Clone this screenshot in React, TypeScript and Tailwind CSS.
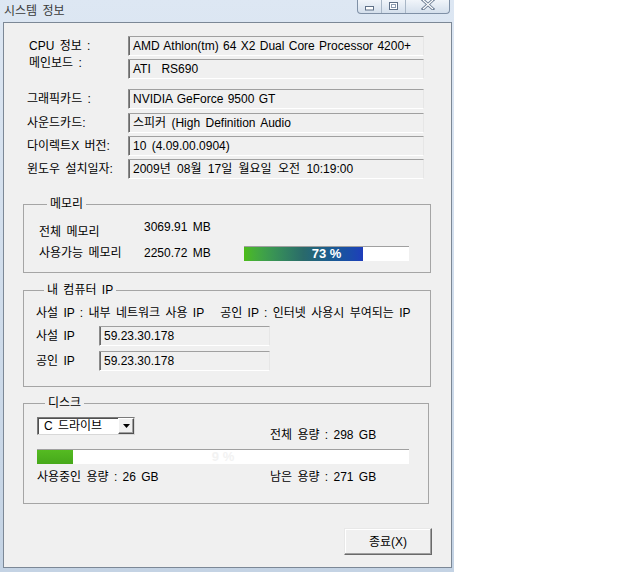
import React from "react";

const FONT = "font-['Liberation_Sans','Noto_Sans_CJK_KR',sans-serif]";

function Field({ children, className }: { children: React.ReactNode; className: string }) {
  return (
    <div
      className={`${className} h-[20px] flex items-center pl-[4px] whitespace-nowrap bg-[#f0f0f0] border border-t-[#a0a0a0] border-l-[#8a8a8a] border-r-[#e6e6e6] border-b-[#ffffff] shadow-[inset_1px_0_0_#6a6a6a]`}
    >
      {children}
    </div>
  );
}

function InfoRow({
  label,
  value,
  className,
  labelClass,
  valueClass,
}: {
  label: string;
  value: string;
  className: string;
  labelClass: string;
  valueClass: string;
}) {
  return (
    <div className={`flex items-center ${className}`}>
      <div className={`w-[101px] whitespace-nowrap ${labelClass}`}>{label}</div>
      <Field className={`w-[296px] ${valueClass}`}>{value}</Field>
    </div>
  );
}

function Legend({ children }: { children: React.ReactNode }) {
  return <legend className="ml-[8px] px-[3px] leading-[14px]">{children}</legend>;
}

export default function App() {
  return (
    <div className={`w-[640px] h-[572px] bg-white flex text-[12px] leading-[14px] text-black [word-spacing:2px] ${FONT}`}>
      <div className="w-[454px] h-[572px] flex flex-col bg-linear-to-b from-[#dde7f3] to-[#c4d3e4] pl-[3px] pr-[2px] pb-[4px]">
        {/* Title bar */}
        <div className="h-[22px] flex items-start justify-between">
          <div className="h-[22px] flex items-center pl-[1px] text-[#3a3a3a] text-[12px]">시스템 정보</div>
          <div className="flex h-[14px] mr-[2px] rounded-b-[4px] border border-t-0 border-[#7f90a6] overflow-hidden bg-linear-to-b from-[#f1f5fa] to-[#d4dfec]">
            <div className="w-[24px] border-r border-[#a8b6c6] flex justify-center pt-[6px]">
              <svg width="9" height="5" viewBox="0 0 9 5">
                <rect x="0.5" y="0.5" width="8" height="3.5" fill="#ffffff" stroke="#5f7087" />
              </svg>
            </div>
            <div className="w-[24px] border-r border-[#a8b6c6] flex justify-center pt-[2px]">
              <svg width="9" height="8" viewBox="0 0 9 8">
                <rect x="0.5" y="0.5" width="8" height="7" fill="#ffffff" stroke="#5f7087" />
                <rect x="2.5" y="2.5" width="4" height="3" fill="none" stroke="#8a9ab0" />
              </svg>
            </div>
            <div className="w-[43px] flex justify-center pt-[0px]">
              <svg width="14" height="10" viewBox="0 0 14 10">
                <path d="M2 0 L12 9 M12 0 L2 9" stroke="#6a7b92" strokeWidth="3" strokeLinecap="square" />
                <path d="M2 0 L12 9 M12 0 L2 9" stroke="#ffffff" strokeWidth="1.2" />
              </svg>
            </div>
          </div>
        </div>

        {/* Client area */}
        <div className="flex-1 flex flex-col bg-[#f0f0f0] border border-[#7c8896]">
          {/* Info rows */}
          <div className="flex flex-col pt-[13px] pl-[23px]">
            <InfoRow
              label="CPU 정보 :"
              value="AMD Athlon(tm) 64 X2 Dual Core Processor 4200+"
              className="h-[20px]"
              labelClass="pl-[2px]"
              valueClass="[word-spacing:1px]"
            />
            <div className="flex items-start h-[20px] mt-[3px]">
              <div className="w-[101px] pl-[2px] -mt-[3px] whitespace-nowrap">메인보드 :</div>
              <Field className="w-[296px]">ATI&nbsp;&nbsp;RS690</Field>
            </div>
            <InfoRow label="그래픽카드 :" value="NVIDIA GeForce 9500 GT" className="h-[20px] mt-[10px]" labelClass="" valueClass="[word-spacing:1px]" />
            <InfoRow label="사운드카드:" value="스피커 (High Definition Audio" className="h-[20px] mt-[4px]" labelClass="" valueClass="" />
            <InfoRow label="다이렉트X 버전:" value="10 (4.09.00.0904)" className="h-[20px] mt-[3px]" labelClass="" valueClass="" />
            <InfoRow
              label="윈도우 설치일자:"
              value="2009년 08월 17일 월요일 오전 10:19:00"
              className="h-[20px] mt-[3px]"
              labelClass=""
              valueClass="[word-spacing:3px]"
            />
          </div>

          {/* Memory */}
          <fieldset className="ml-[19px] w-[408px] mt-[18px] border border-[#a5a5a5] pl-[15px] pt-[11px] pb-[11px]">
            <Legend>메모리</Legend>
            <div className="flex items-start h-[16px]">
              <div className="w-[105px] mt-[3px]">전체 메모리</div>
              <div className="-mt-[2px]">3069.91 MB</div>
            </div>
            <div className="flex items-center h-[16px] mt-[7px]">
              <div className="w-[105px]">사용가능 메모리</div>
              <div className="w-[100px]">2250.72 MB</div>
              <div className="relative w-[165px] h-[15px] bg-white border-t border-[#a0a0a0] flex">
                <div className="w-[119px] h-full bg-linear-to-r from-[#4cbc14] via-[#2a6a6a] to-[#1f3dbb]" />
                <span className="absolute inset-0 flex items-center justify-center text-white font-bold text-[13px] [word-spacing:0px] font-['Liberation_Sans',sans-serif]">
                  73 %
                </span>
              </div>
            </div>
          </fieldset>

          {/* IP */}
          <fieldset className="ml-[19px] w-[408px] mt-[10px] border border-[#a5a5a5] pl-[12px] pt-[9px] pb-[15px]">
            <Legend>내 컴퓨터 IP</Legend>
            <div className="h-[14px] whitespace-nowrap">사설 IP : 내부 네트워크 사용 IP&nbsp;&nbsp;&nbsp;공인 IP : 인터넷 사용시 부여되는 IP</div>
            <div className="flex items-center mt-[6px]">
              <div className="w-[63px]">사설 IP</div>
              <Field className="w-[171px]">59.23.30.178</Field>
            </div>
            <div className="flex items-center mt-[5px]">
              <div className="w-[63px]">공인 IP</div>
              <Field className="w-[171px]">59.23.30.178</Field>
            </div>
          </fieldset>

          {/* Disk */}
          <fieldset className="ml-[19px] w-[406px] mt-[9px] border border-[#a5a5a5] pl-[13px] pt-[7px] pb-[19px]">
            <Legend>디스크</Legend>
            <div className="flex items-start h-[25px]">
              <div className="w-[98px] h-[18px] flex bg-white border border-t-[#7a7a7a] border-l-[#7a7a7a] border-r-[#d8d8d8] border-b-[#d8d8d8] shadow-[inset_1px_1px_0_#505050]">
                <div className="flex-1 pl-[6px] flex items-center">C 드라이브</div>
                <div className="w-[16px] h-[16px] flex items-center justify-center bg-[#f0f0f0] border border-t-white border-l-white border-r-[#505050] border-b-[#505050] shadow-[inset_-1px_-1px_0_#a0a0a0]">
                  <svg width="7" height="4" viewBox="0 0 7 4">
                    <path d="M0 0 H7 L3.5 4 Z" fill="#000000" />
                  </svg>
                </div>
              </div>
              <div className="ml-[135px] mt-[11px] whitespace-nowrap">전체 용량 : 298 GB</div>
            </div>
            <div className="relative w-[372px] h-[15px] mt-[7px] bg-white border-t border-[#a0a0a0] flex">
              <div className="w-[36px] h-full bg-linear-to-b from-[#55bb22] to-[#46a81a]" />
              <span className="absolute inset-0 flex items-center justify-center text-[#f2f2f2] font-bold text-[13px] [word-spacing:0px] font-['Liberation_Sans',sans-serif]">
                9 %
              </span>
            </div>
            <div className="flex h-[14px] mt-[6px]">
              <div className="w-[233px] whitespace-nowrap">사용중인 용량 : 26 GB</div>
              <div className="whitespace-nowrap">남은 용량 : 271 GB</div>
            </div>
          </fieldset>

          {/* Button */}
          <div className="flex justify-end pr-[19px] mt-[24px]">
            <button className="w-[88px] h-[27px] bg-[#f0f0f0] border border-t-[#e8e8e8] border-l-[#e8e8e8] border-r-[#6a6a6a] border-b-[#6a6a6a] shadow-[inset_-1px_-1px_0_#a0a0a0,inset_1px_1px_0_#ffffff] text-[12px] leading-[14px]">
              종료(X)
            </button>
          </div>
        </div>
      </div>
    </div>
  );
}
